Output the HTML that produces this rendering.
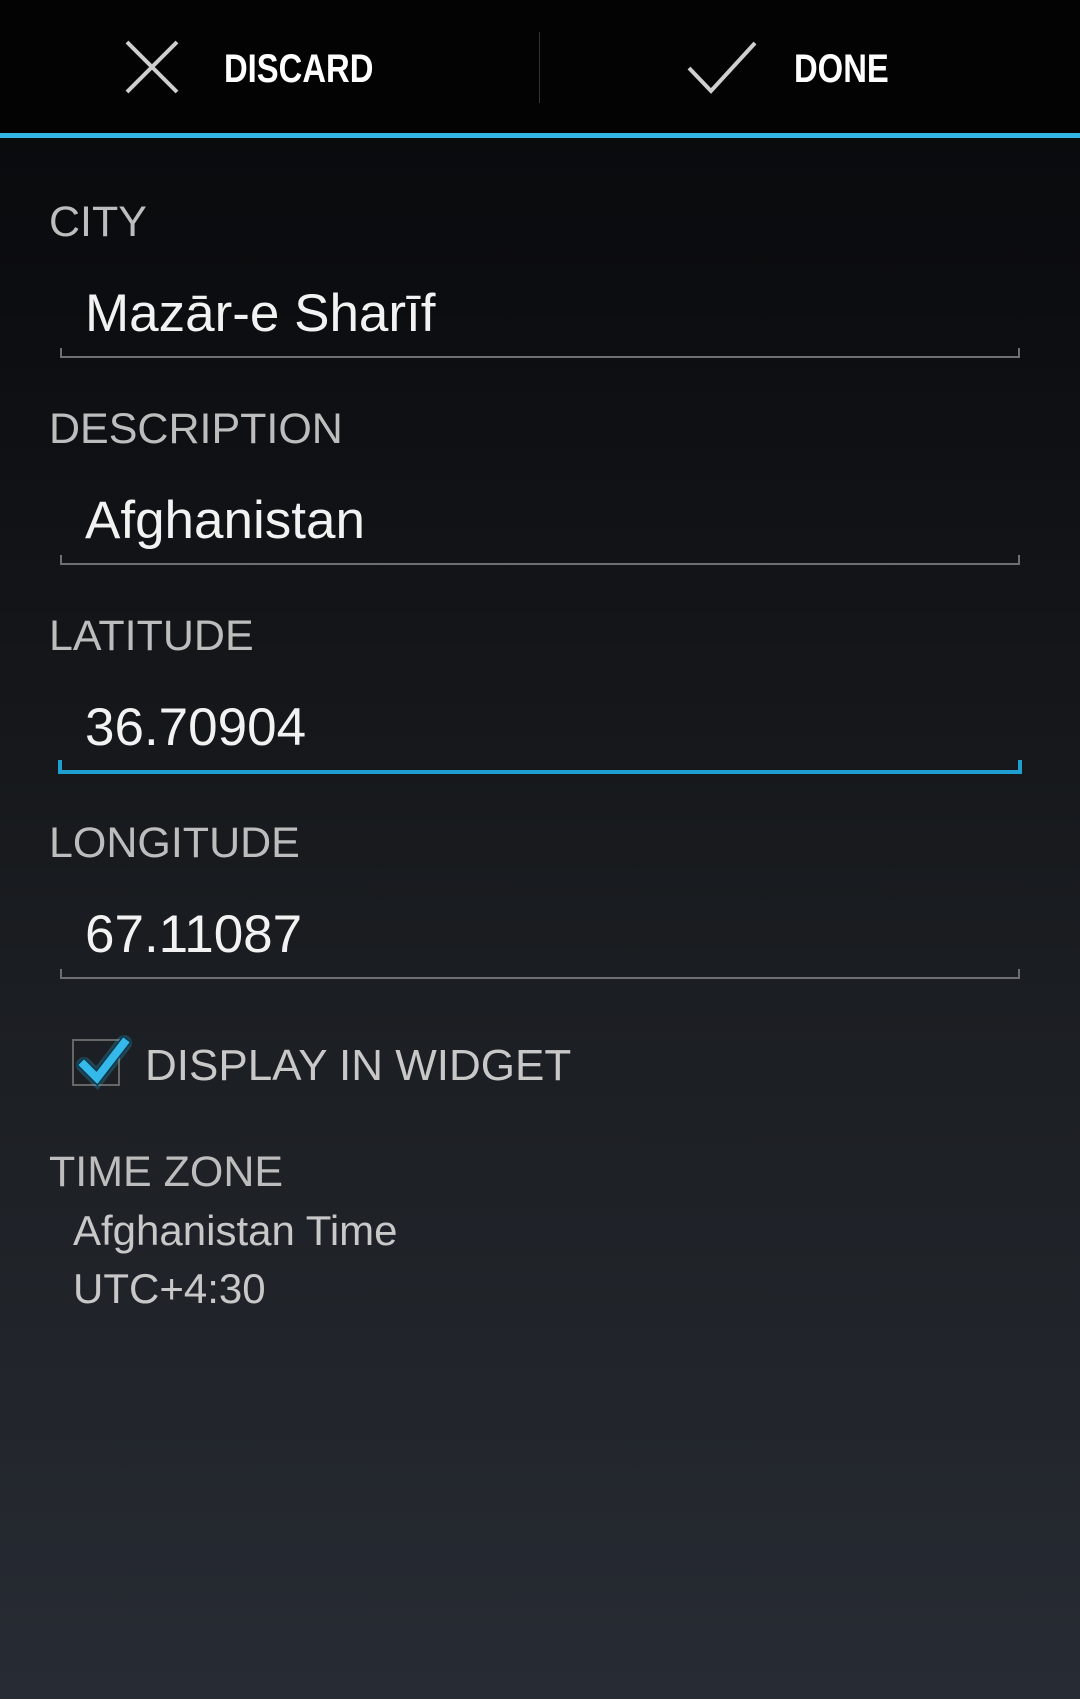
<!DOCTYPE html>
<html><head><meta charset="utf-8"><style>
html,body{margin:0;padding:0}
body{width:1080px;height:1699px;position:relative;overflow:hidden;background:linear-gradient(#0a0b0d 138px,#0c0d10 300px,#1b1e22 1000px,#272b33 1699px);font-family:"Liberation Sans",sans-serif}
.bar{position:absolute;left:0;top:0;width:1080px;height:133px;background:#030303}
.blue{position:absolute;left:0;top:133px;width:1080px;height:5px;background:#33b5e5}
.t{position:absolute;line-height:1;white-space:nowrap}
.btn{font-weight:bold;font-size:40px;color:#fff;transform:scaleX(0.82);transform-origin:left}
.lab{font-size:43px;color:#bdbdbd;left:49px}
.val{font-size:53px;color:#f2f2f2;left:85px}
.ul{position:absolute;left:60px;width:956px;height:8px;border:2px solid #6d6f72;border-top:none}
</style></head><body>
<div class="bar"></div>
<div class="blue"></div>
<svg style="position:absolute;left:0;top:0" width="1080" height="133">
<path d="M127 42 L177 92 M177 42 L127 92" stroke="#cfcfcf" stroke-width="4" fill="none"/>
<path d="M689 68 L711 91 L755 43" stroke="#cfcfcf" stroke-width="4" fill="none"/>
<rect x="539" y="32" width="1" height="71" fill="#333"/>
</svg>
<div class="t btn" style="left:224px;top:49px">DISCARD</div>
<div class="t btn" style="left:794px;top:49px">DONE</div>

<div class="t lab" style="top:201px">CITY</div>
<div class="t val" style="top:287px">Mazār-e Sharīf</div>
<div class="ul" style="top:348px"></div>

<div class="t lab" style="top:408px">DESCRIPTION</div>
<div class="t val" style="top:494px">Afghanistan</div>
<div class="ul" style="top:555px"></div>

<div class="t lab" style="top:615px">LATITUDE</div>
<div class="t val" style="top:701px">36.70904</div>
<div style="position:absolute;left:58px;top:760px;width:956px;height:10px;border:4px solid #1e9fd0;border-top:none"></div>

<div class="t lab" style="top:822px">LONGITUDE</div>
<div class="t val" style="top:908px">67.11087</div>
<div class="ul" style="top:969px"></div>

<div style="position:absolute;left:72px;top:1039px;width:44px;height:43px;border:2px solid #666"></div>
<svg style="position:absolute;left:60px;top:1025px" width="90" height="80">
<path d="M24 40 L37 53 L64 18" stroke="#33b5e5" stroke-width="16" fill="none" opacity="0.25" stroke-linecap="round"/>
<path d="M24 40 L37 53 L64 18" stroke="#0b3a4e" stroke-width="11" fill="none" stroke-linecap="square"/>
<path d="M24 40 L37 53 L64 18" stroke="#35b8ea" stroke-width="8" fill="none" stroke-linecap="square"/>
</svg>
<div class="t" style="left:145px;top:1044px;font-size:44px;color:#c8c8c8">DISPLAY IN WIDGET</div>

<div class="t lab" style="top:1151px">TIME ZONE</div>
<div class="t" style="left:73px;top:1210px;font-size:42px;color:#c8c8c8">Afghanistan Time</div>
<div class="t" style="left:73px;top:1268px;font-size:42px;color:#c8c8c8">UTC+4:30</div>
</body></html>
